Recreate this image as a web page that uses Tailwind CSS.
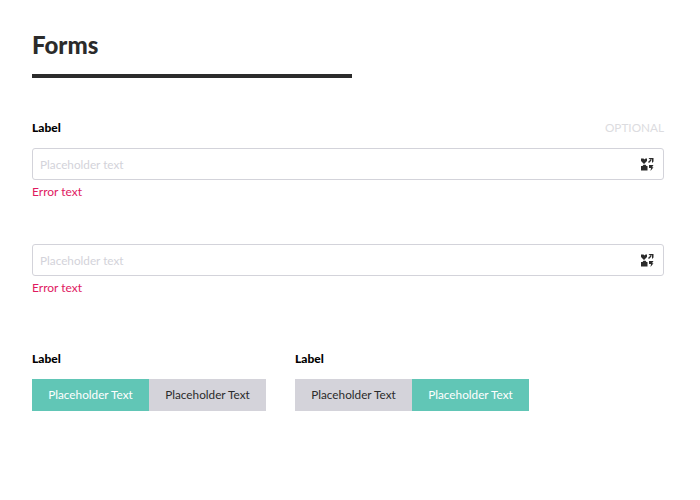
<!DOCTYPE html>
<html>
<head>
<meta charset="utf-8">
<script src="https://cdn.jsdelivr.net/npm/@tailwindcss/browser@4"></script>
</head>
<body class="bg-white font-['Lato',sans-serif]">
<div class="w-[700px] h-[500px] pl-8 pr-9 pt-8 overflow-hidden">
  <h1 class="h-7 text-[24px] leading-[26px] font-black text-[#2b2b2b]">Forms</h1>
  <div class="w-80 h-1 mt-[14px] bg-[#2b2b2b]"></div>

  <div class="flex justify-between items-center h-4 mt-[42px]">
    <span class="text-[12px] font-black text-black">Label</span>
    <span class="text-[11.75px] text-[#dcdce0]">OPTIONAL</span>
  </div>
  <div class="flex justify-between items-center h-8 mt-3 pl-[7px] pr-[9px] border border-[#d3d3da] rounded-[3px]">
    <span class="text-[11.75px] leading-8 pt-px text-[#d3d3da]">Placeholder text</span>
    <svg class="w-[13px] h-[13px]" viewBox="0 0 13 13" fill="#2b2b2b"><path d="M0 .5h2.500l1 1 1-1H6v2.500L3 6 0 3zM7.500 0H12.500v3.500L11 5V1.500H9zM7 4l2.500-2.500 1 1L8 5zM0 8h1.500l1-1.200h2l1 1.200H6.500v4.500H0zM8 7h4.500L11 9.300h1.500L9.500 13l.5-3H8z"/></svg>
  </div>
  <p class="h-4 mt-1 text-[12px] leading-4 text-[#e0195f]">Error text</p>

  <div class="flex justify-between items-center h-8 mt-11 pl-[7px] pr-[9px] border border-[#d3d3da] rounded-[3px]">
    <span class="text-[11.75px] leading-8 pt-px text-[#d3d3da]">Placeholder text</span>
    <svg class="w-[13px] h-[13px]" viewBox="0 0 13 13" fill="#2b2b2b"><path d="M0 .5h2.500l1 1 1-1H6v2.500L3 6 0 3zM7.500 0H12.500v3.500L11 5V1.500H9zM7 4l2.500-2.500 1 1L8 5zM0 8h1.500l1-1.200h2l1 1.200H6.500v4.500H0zM8 7h4.500L11 9.300h1.500L9.500 13l.5-3H8z"/></svg>
  </div>
  <p class="h-4 mt-1 text-[12px] leading-4 text-[#e0195f]">Error text</p>

  <div class="flex gap-[29px] mt-[55px]">
    <div>
      <p class="h-4 text-[12px] leading-4 font-black text-black">Label</p>
      <div class="flex mt-3 h-8 text-[11.75px] leading-8 text-center">
        <span class="w-[117px] bg-[#61c6b6] text-white">Placeholder Text</span>
        <span class="w-[117px] bg-[#d4d3da] text-[#2b2b2b]">Placeholder Text</span>
      </div>
    </div>
    <div>
      <p class="h-4 text-[12px] leading-4 font-black text-black">Label</p>
      <div class="flex mt-3 h-8 text-[11.75px] leading-8 text-center">
        <span class="w-[117px] bg-[#d4d3da] text-[#2b2b2b]">Placeholder Text</span>
        <span class="w-[117px] bg-[#61c6b6] text-white">Placeholder Text</span>
      </div>
    </div>
  </div>
</div>
</body>
</html>
